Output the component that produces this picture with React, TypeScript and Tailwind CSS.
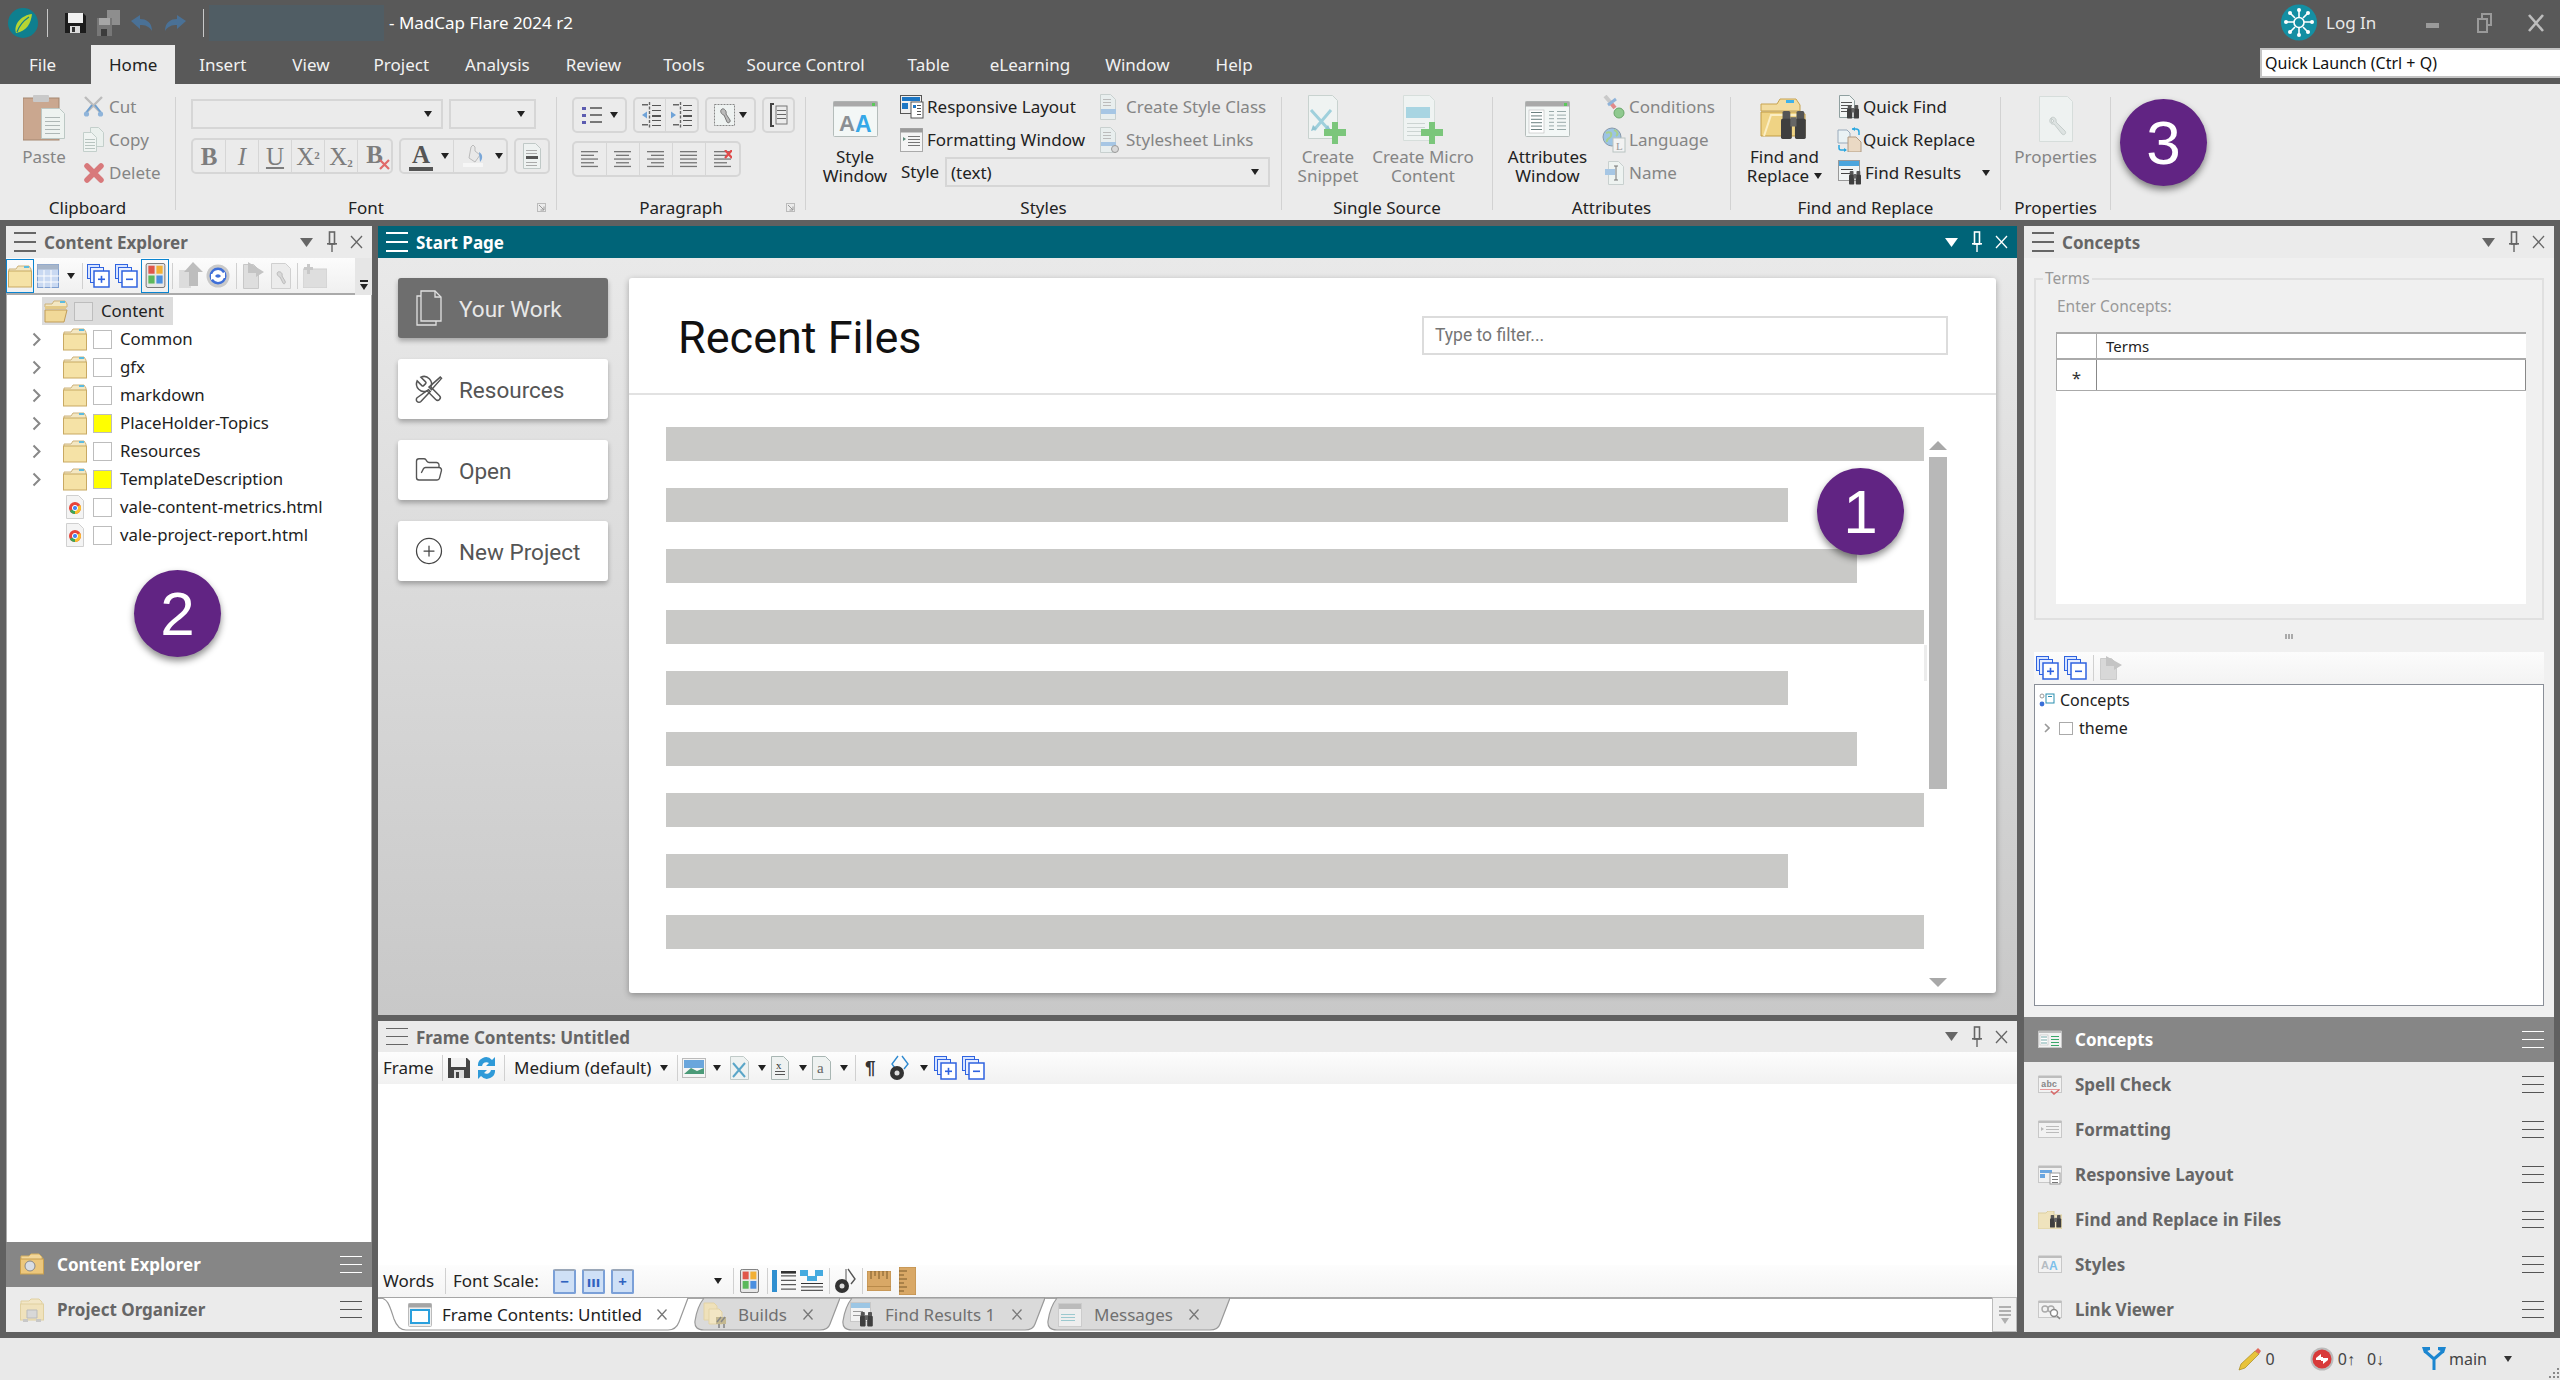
import { ReactNode } from "react";
import { CirclePlus, FolderOpen } from "lucide-react";
import clsx from "clsx";

/* ---------- small drawing helpers ---------- */

function Ico({ w, h, vb, children, className }: { w: number; h: number; vb?: string; children: ReactNode; className?: string }) {
  return (
    <svg width={w} height={h} viewBox={vb ?? `0 0 ${w} ${h}`} className={clsx("shrink-0", className)}>
      {children}
    </svg>
  );
}

function Caret({ color = "#222", className }: { color?: string; className?: string }) {
  return (
    <Ico w={8} h={6} className={className}>
      <path d="M0 0h8L4 6z" fill={color} />
    </Ico>
  );
}

function Bino({ x = 0, y = 0, s = 1 }: { x?: number; y?: number; s?: number }) {
  return (
    <g transform={`translate(${x} ${y}) scale(${s})`}>
      <rect x="1" y="0" width="5" height="6" rx="1" fill="#555" />
      <rect x="10" y="0" width="5" height="6" rx="1" fill="#555" />
      <rect x="0" y="5" width="7" height="13" rx="1" fill="#3f3f3f" />
      <rect x="9" y="5" width="7" height="13" rx="1" fill="#3f3f3f" />
      <rect x="6" y="4" width="4" height="6" fill="#666" />
    </g>
  );
}

function Sheet({ x, y, w, h, fill = "#f2f6f4", stroke = "#b8c6c2" }: { x: number; y: number; w: number; h: number; fill?: string; stroke?: string }) {
  return <path d={`M${x + 0.5} ${y + 0.5}h${w - 6}l5 5v${h - 6}h-${w - 1}z`} fill={fill} stroke={stroke} />;
}

function Lines({ x, y, w, n, step = 3, color = "#9aa" }: { x: number; y: number; w: number; n: number; step?: number; color?: string }) {
  return (
    <>
      {Array.from({ length: n }).map((_, i) => (
        <rect key={i} x={x} y={y + i * step} width={w} height={1} fill={color} />
      ))}
    </>
  );
}

function Hamburger({ color = "#666", thin }: { color?: string; thin?: boolean }) {
  return (
    <div className={clsx("flex flex-col shrink-0 w-[22px]", "gap-[7px]")}>
      <div className={thin ? "h-px" : "h-[2px]"} style={{ backgroundColor: color }} />
      <div className={thin ? "h-px" : "h-[2px]"} style={{ backgroundColor: color }} />
      <div className={thin ? "h-px" : "h-[2px]"} style={{ backgroundColor: color }} />
    </div>
  );
}

function Folder({ w = 24, h = 24, open }: { w?: number; h?: number; open?: boolean }) {
  return (
    <Ico w={w} h={h} vb="0 0 24 24">
      <path d="M1 5h7l2-3h11l2 3v3H1z" fill="#f3e7c2" stroke="#cdb27a" />
      <rect x="16" y="2" width="5" height="2" fill="#5bbbe0" />
      {open ? (
        <>
          <path d="M1 7h21v3H1z" fill="#e3c987" />
          <path d="M1 23V11h22l-3 12z" fill="#f1d998" stroke="#c19d58" />
        </>
      ) : (
        <rect x="0.5" y="7" width="23" height="16" fill="#f5e2a6" stroke="#c8a963" />
      )}
    </Ico>
  );
}

function ChromeDoc() {
  return (
    <Ico w={18} h={24}>
      <Sheet x={0} y={0} w={18} h={24} fill="#f4f4f4" stroke="#d0d0d0" />
      <circle cx="9" cy="13" r="6" fill="#e8443a" />
      <path d="M9 13L3.8 16a6 6 0 0 0 5.2 3z" fill="#3aa757" />
      <path d="M9 13v6a6 6 0 0 0 5.2-9z" fill="#fbc02d" />
      <circle cx="9" cy="13" r="2.6" fill="#4285f4" stroke="#fff" />
    </Ico>
  );
}

function Expand({ minus, w = 23, h = 24 }: { minus?: boolean; w?: number; h?: number }) {
  return (
    <Ico w={w} h={h} vb="0 0 23 24">
      <rect x="0.5" y="0.5" width="12" height="14" fill="#d7e4ff" stroke="#2f63e0" />
      <rect x="3.5" y="3.5" width="13" height="15" fill="#e8efff" stroke="#2f63e0" />
      <rect x="7" y="7" width="15" height="16" fill="#fff" stroke="#2f63e0" strokeWidth="1.5" />
      <rect x="11" y="14.5" width="7" height="1.6" fill="#2f63e0" />
      {!minus && <rect x="13.7" y="11.8" width="1.6" height="7" fill="#2f63e0" />}
    </Ico>
  );
}

function ColorSquares({ w = 22, h = 28 }: { w?: number; h?: number }) {
  return (
    <Ico w={w} h={h} vb="0 0 22 28">
      <rect x="0.5" y="0.5" width="21" height="27" rx="2" fill="#e7e7e7" stroke="#666" />
      <rect x="3" y="3" width="7" height="9" fill="#e0564a" />
      <rect x="12" y="3" width="7" height="9" fill="#f2b035" />
      <rect x="3" y="14" width="7" height="9" fill="#5cb85c" />
      <rect x="12" y="14" width="7" height="9" fill="#4a8fe0" />
    </Ico>
  );
}

function WinBox({ w = 45, h = 36, children }: { w?: number; h?: number; children?: ReactNode }) {
  return (
    <Ico w={w} h={h} vb="0 0 45 36">
      <rect x="0.5" y="0.5" width="44" height="35" rx="1" fill="#f3f7f6" stroke="#b5bdbb" />
      <rect x="0.5" y="0.5" width="44" height="5" fill="#a9a9a9" />
      <rect x="39" y="2" width="3" height="3" fill="#5ac85a" />
      {children}
    </Ico>
  );
}

function SmallPanelIcon({ kind }: { kind: "concepts" | "spell" | "format" | "layout" | "find" | "styles" | "link" }) {
  if (kind === "find") {
    return (
      <Ico w={24} h={18}>
        <path d="M0 2h8l2-2h6v4h8v14H0z" fill="#efe3bd" stroke="#dccf9f" />
        <Bino x={12} y={4} s={0.7} />
      </Ico>
    );
  }
  return (
    <Ico w={24} h={20}>
      <rect x="0.5" y="1.5" width="23" height="16" fill="#f2f2f2" stroke="#c8c8c8" />
      <rect x="0.5" y="0.5" width="23" height="2.5" fill="#bdbdbd" />
      {kind === "concepts" && (
        <>
          <rect x="2" y="5" width="8" height="10" fill="#fff" stroke="#bbb" strokeWidth=".6" />
          <Lines x={3} y={6.5} w={6} n={3} color="#7aa" />
          <Lines x={13} y={6} w={8} n={4} color="#3aa76a" />
        </>
      )}
      {kind === "spell" && (
        <>
          <text x="3" y="12" fontSize="9" fill="#888" fontFamily="'Liberation Mono',monospace">abc</text>
          <rect x="2" y="14" width="20" height="1" fill="#e89a9a" />
          <path d="M13 16l3 3 5-4" fill="none" stroke="#d96a6a" strokeWidth="1.6" />
        </>
      )}
      {kind === "format" && (
        <>
          <path d="M3 7l3 2-3 2z" fill="#bbb" />
          <Lines x={8} y={6} w={13} n={3} step={3} color="#bbb" />
        </>
      )}
      {kind === "layout" && (
        <>
          <rect x="2" y="5" width="12" height="3" fill="#6ba6e0" />
          <rect x="2" y="9" width="5" height="4" fill="#6ba6e0" />
          <rect x="12" y="8" width="10" height="11" fill="#fff" stroke="#999" />
          <Lines x={14} y={11} w={6} n={3} color="#777" />
        </>
      )}
      {kind === "styles" && (
        <>
          <text x="3" y="14" fontSize="11" fill="#b5bcc2" fontWeight="700" fontFamily="'Liberation Sans',sans-serif">A</text>
          <text x="11" y="15" fontSize="12" fill="#7cc0ea" fontWeight="700" fontFamily="'Liberation Sans',sans-serif">A</text>
        </>
      )}
      {kind === "link" && (
        <>
          <circle cx="7" cy="9" r="3" fill="none" stroke="#aaa" strokeWidth="1.4" />
          <circle cx="13" cy="9" r="3" fill="none" stroke="#aaa" strokeWidth="1.4" />
          <circle cx="16" cy="13" r="3.5" fill="#fff" stroke="#888" strokeWidth="1.4" />
          <path d="M19 16l3 3" stroke="#888" strokeWidth="1.6" />
        </>
      )}
    </Ico>
  );
}

/* ---------- ribbon parts ---------- */

function Sep() {
  return <div className="w-px h-[113px] mt-[13px] bg-[#d2d2d2] shrink-0" />;
}

function Group({ label, className, launcher, children }: { label: string; className: string; launcher?: boolean; children: ReactNode }) {
  return (
    <div className={clsx("flex flex-col h-[136px] shrink-0", className)}>
      <div className="h-[112px] flex">{children}</div>
      <div className="relative h-[24px] leading-[24px] text-center text-[#222]">
        {label}
        {launcher && (
          <Ico w={9} h={9} className="absolute right-[10px] top-[7px]">
            <rect x="0.5" y="0.5" width="8" height="8" fill="none" stroke="#bbb" />
            <path d="M2 2l5 5M7 3.5V7H3.5" fill="none" stroke="#999" />
          </Ico>
        )}
      </div>
    </div>
  );
}

function SmallBtn({ icon, label, off, gap = "ml-[4px]", slot = "w-[23px]", className }: { icon: ReactNode; label: string; off?: boolean; gap?: string; slot?: string; className?: string }) {
  return (
    <div className={clsx("flex items-center h-[33px] whitespace-nowrap", className)}>
      <div className={clsx("flex justify-center items-center shrink-0", slot)}>{icon}</div>
      <span className={clsx(gap, off ? "text-[#858585]" : "text-[#222]")}>{label}</span>
    </div>
  );
}

function BigBtn({ icon, lines, off, className, caret }: { icon: ReactNode; lines: string[]; off?: boolean; className: string; caret?: boolean }) {
  return (
    <div className={clsx("flex flex-col items-center pt-[9px] shrink-0", className)}>
      <div className="h-[52px] flex items-center justify-center">{icon}</div>
      <div className={clsx("mt-[2px] text-center leading-[19px]", off ? "text-[#858585]" : "text-[#222]")}>
        {lines.map((l, i) => (
          <div key={l} className="whitespace-nowrap">
            {l}
            {caret && i === lines.length - 1 && <Caret className="inline-block ml-[5px] mb-[2px]" />}
          </div>
        ))}
      </div>
    </div>
  );
}

function Select({ className, value }: { className: string; value?: string }) {
  return (
    <div className={clsx("h-[30px] border-2 border-[#d6d6d6] flex items-center px-[4px] text-[#222] shrink-0", className)}>
      <span className="pt-[2px]">{value}</span>
      <Caret className="ml-auto mr-[5px]" />
    </div>
  );
}

function BtnGroup({ children, className }: { children: ReactNode; className?: string }) {
  return <div className={clsx("flex h-[36px] border-2 border-[#d6d6d6] rounded-[5px] divide-x divide-[#d6d6d6] shrink-0", className)}>{children}</div>;
}

function Cell({ children, className = "w-[33px]" }: { children: ReactNode; className?: string }) {
  return <div className={clsx("h-full flex items-center justify-center", className)}>{children}</div>;
}

function SerifGlyph({ children, className }: { children: ReactNode; className?: string }) {
  return <span className={clsx("[font-family:'Liberation_Serif',serif] text-[25px] leading-none text-[#7d7d7d]", className)}>{children}</span>;
}

function AlignIcon({ kind }: { kind: "left" | "center" | "right" | "just" | "clear" }) {
  const rows = [
    [0, 17],
    kind === "left" || kind === "clear" ? [0, 13] : kind === "center" ? [2, 13] : kind === "right" ? [4, 13] : [0, 17],
    [0, 17],
    kind === "left" || kind === "clear" ? [0, 13] : kind === "center" ? [2, 13] : kind === "right" ? [4, 13] : [0, 17],
    [0, 17],
  ];
  return (
    <Ico w={18} h={18}>
      {rows.map(([x, w], i) => (
        <rect key={i} x={x} y={1 + i * 3.7} width={w} height={1.3} fill="#777" />
      ))}
      {kind === "clear" && <path d="M11 0l7 8M18 0l-7 8" stroke="#e04a4a" strokeWidth="2.2" />}
    </Ico>
  );
}

function IndentIcon({ right }: { right?: boolean }) {
  return (
    <Ico w={23} h={26}>
      <path d="M10.5 0v26" stroke="#666" strokeWidth="1.4" strokeDasharray="3 1.5" />
      <rect x="3" y="2" width="6" height="1.5" fill="#666" />
      <rect x="3" y="22" width="6" height="1.5" fill="#666" />
      <Lines x={13} y={3} w={9} n={5} step={5} color="#555" />
      <rect x="13" y="13" width="9" height="2" fill="#555" />
      <path d={right ? "M1 9.5l5 3.5-5 3.5z" : "M8 9.5L3 13l5 3.5z"} fill="#6fa3d8" />
    </Ico>
  );
}

/* ---------- ribbon icons ---------- */

const PasteIcon = (
  <Ico w={42} h={47}>
    <rect x="0" y="3" width="36" height="42" fill="#caa78f" stroke="#a58770" />
    <rect x="10" y="0" width="16" height="7" rx="1" fill="#c9c9c9" />
    <path d="M18.5 13.5h18l5 5v25h-23z" fill="#eef3f0" stroke="#bcc8c4" />
    <Lines x={22} y={22} w={15} n={5} step={4} color="#aeb7b5" />
  </Ico>
);

const CutIcon = (
  <Ico w={21} h={22}>
    <path d="M2 1l15 15M19 1L4 16" stroke="#bcbcbc" strokeWidth="2.4" />
    <path d="M9 9L2 18M12 9l7 9" stroke="#6f9fcf" strokeWidth="2" />
    <circle cx="3.5" cy="18" r="2.6" fill="#8fb4da" />
    <circle cx="17.5" cy="18" r="2.6" fill="#8fb4da" />
  </Ico>
);

const CopyIcon = (
  <Ico w={21} h={25}>
    <Sheet x={7} y={0} w={14} h={20} fill="#eaf0ed" stroke="#c3cfcb" />
    <Sheet x={0} y={5} w={14} h={20} fill="#f0f4f2" stroke="#c3cfcb" />
    <Lines x={2} y={12} w={10} n={4} color="#b8c4c0" />
  </Ico>
);

const DeleteIcon = (
  <Ico w={20} h={22}>
    <path d="M3 4l14 14M17 4L3 18" stroke="#d8797b" strokeWidth="5.5" strokeLinecap="round" />
  </Ico>
);

const SnippetIcon = (
  <Ico w={41} h={49}>
    <Sheet x={0} y={0} w={30} h={44} fill="#eff3f2" stroke="#c8d2cf" />
    <path d="M3 15l18 20M23 15L6 35" stroke="#9fd0dc" strokeWidth="3" />
    <path d="M5 30l-2 6 6-2zM20 30l3 6-6-2z" fill="#8fc4d2" />
    <path d="M24 27h6v7h8v7h-8v8h-6v-8h-8v-7h8z" fill="#7bc67b" />
  </Ico>
);

const MicroIcon = (
  <Ico w={41} h={49}>
    <Sheet x={0} y={0} w={32} h={46} fill="#eff3f2" stroke="#d6dedb" />
    <rect x="3" y="12" width="24" height="11" fill="#a8d5e2" />
    <Lines x={4} y={28} w={18} n={4} step={4} color="#ccd4d2" />
    <path d="M26 27h6v7h8v7h-8v8h-6v-8h-8v-7h8z" fill="#7bc67b" />
  </Ico>
);

const FindReplaceIcon = (
  <Ico w={50} h={42}>
    <path d="M1 6h16l3-5h16l4 6v6H1z" fill="#f2dca0" stroke="#c7a350" />
    <rect x="26" y="2" width="8" height="3" fill="#3eb2ea" />
    <path d="M1 38V14h36l8 2v22z" fill="#efd384" stroke="#c19c45" />
    <path d="M4 38l7-21h30" fill="none" stroke="#fbeec4" strokeWidth="2" />
    <Bino x={21} y={13} s={1.55} />
  </Ico>
);

const QuickFindIcon = (
  <Ico w={22} h={24}>
    <Sheet x={0} y={0} w={16} h={23} fill="#f2f5f4" stroke="#8fa0a0" />
    <Lines x={2} y={7} w={11} n={4} color="#555" />
    <Bino x={8} y={10} s={0.75} />
  </Ico>
);

const QuickReplaceIcon = (
  <Ico w={25} h={25}>
    <path d="M1 3h9l3 3v10H1z" fill="#eaf2f4" stroke="#9ab" />
    <path d="M11 10h8l5 5v10H11z" fill="#ead9c4" stroke="#b09a82" />
    <path d="M15 2h4a3 3 0 0 1 3 3v3" fill="none" stroke="#2aa7e0" strokeWidth="1.5" />
    <path d="M15 2l3-2v4z" fill="#2aa7e0" />
    <path d="M2 18v3a2 2 0 0 0 2 2h5" fill="none" stroke="#2aa7e0" strokeWidth="1.5" />
    <path d="M10 23l-3-2v4z" fill="#2aa7e0" />
  </Ico>
);

const FindResultsIcon = (
  <Ico w={24} h={25}>
    <rect x="0.5" y="0.5" width="21" height="20" fill="#f0f4f4" stroke="#999" />
    <rect x="1" y="1" width="20" height="5" fill="#4aa5dd" />
    <Lines x={3} y={9} w={12} n={2} step={4} color="#444" />
    <Bino x={11} y={11} s={0.75} />
  </Ico>
);

const SwatchDoc = ({ tint }: { tint: "blue" | "link" }) => (
  <Ico w={20} h={26}>
    <Sheet x={0} y={0} w={16} h={26} fill="#e8eeee" stroke="#c8d0cf" />
    <Lines x={3} y={5} w={8} n={3} color="#bbb" />
    <rect x="1" y="15" width="15" height={tint === "blue" ? 5 : 4} fill="#a6c6e4" />
    {tint === "link" && <circle cx="15" cy="22" r="3.5" fill="#d8d8d8" stroke="#999" />}
  </Ico>
);

const ResponsiveIcon = (
  <Ico w={24} h={24}>
    <rect x="0.5" y="0.5" width="21" height="18" fill="#eee" stroke="#555" />
    <rect x="2" y="2" width="18" height="4" fill="#1c76c4" />
    <rect x="2" y="8" width="6" height="6" fill="#1c76c4" />
    <rect x="11" y="7" width="12" height="16" fill="#fff" stroke="#555" />
    <rect x="13" y="10" width="3" height="3" fill="#1c76c4" />
    <Lines x={17} y={10} w={4} n={4} color="#555" />
  </Ico>
);

const FormatWinIcon = (
  <Ico w={23} h={24}>
    <rect x="0.5" y="0.5" width="22" height="23" fill="#f4f4f4" stroke="#aaa" />
    <rect x="0.5" y="0.5" width="22" height="4" fill="#9a9a9a" />
    <path d="M3 9l3 2-3 2z" fill="#5b8a7a" />
    <Lines x={8} y={8} w={12} n={4} color="#777" />
  </Ico>
);

const ConditionsIcon = (
  <Ico w={23} h={24}>
    <path d="M3 1l6 7" stroke="#c9c9c9" strokeWidth="4" />
    <path d="M8 7l5 6" stroke="#e18a8a" strokeWidth="4" />
    <path d="M6 10l8-6" stroke="#8fb4da" strokeWidth="3" />
    <circle cx="17" cy="18" r="5" fill="#8fc98f" stroke="#6aa86a" />
  </Ico>
);

const LanguageIcon = (
  <Ico w={24} h={26}>
    <circle cx="10" cy="10" r="9" fill="#9cc4e4" stroke="#89a" />
    <path d="M4 6c4-2 6 0 5 3s-5 2-4 6M12 3c3 1 5 4 2 6" stroke="#a7cf8f" strokeWidth="2" fill="none" />
    <rect x="11" y="11" width="12" height="14" fill="#f2f2f2" stroke="#b9c4c2" />
    <text x="14" y="23" fontSize="11" fill="#999" fontFamily="'Liberation Serif',serif">L</text>
  </Ico>
);

const NameIcon = (
  <Ico w={20} h={24}>
    <Sheet x={4} y={0} w={16} h={24} fill="#eef3f1" stroke="#c8d0cf" />
    <rect x="1" y="8" width="10" height="6" fill="#a6c6e4" />
    <path d="M12 5v14M10 5h4M10 19h4" stroke="#777" fill="none" />
  </Ico>
);

const PropertiesIcon = (
  <Ico w={34} h={46}>
    <Sheet x={0} y={0} w={34} h={46} fill="#eef2f1" stroke="#d6dddb" />
    <path d="M12 22c-3 3 0 7 3 6l8 10c2 2 5-1 3-3L17 26c1-4-3-6-5-4l3 3-2 2z" fill="#dde3e2" stroke="#c6cecc" />
  </Ico>
);

const AttributesIcon = (
  <WinBox w={45} h={36}>
    <rect x="4" y="9" width="15" height="23" fill="#fff" stroke="#bbb" strokeWidth=".6" />
    <Lines x={6} y={11} w={11} n={6} step={3.4} color="#6c8080" />
    <Lines x={24} y={10} w={5} n={6} step={3.6} color="#9aa" />
    <Lines x={32} y={10} w={9} n={6} step={3.6} color="#9aa" />
  </WinBox>
);

const StyleWindowIcon = (
  <WinBox>
    <text x="6" y="30" fontSize="22" fill="#8a8f93" fontWeight="700" fontFamily="'Liberation Sans',sans-serif">A</text>
    <text x="22" y="31" fontSize="23" fill="#35a8e8" fontWeight="700" fontFamily="'Liberation Sans',sans-serif">A</text>
  </WinBox>
);

function Ribbon() {
  return (
    <div className="relative h-[136px] bg-[#ebebeb] flex text-[17px] shrink-0">
      <Group label="Clipboard" className="w-[175px]">
        <div className="flex pl-[22px] pt-[6px]">
          <div className="w-[44px] flex flex-col items-center pt-[5px] text-[#858585]">
            {PasteIcon}
            <span className="mt-[3px] leading-[24px]">Paste</span>
          </div>
          <div className="ml-[16px] flex flex-col">
            <SmallBtn icon={CutIcon} label="Cut" off />
            <SmallBtn icon={CopyIcon} label="Copy" off />
            <SmallBtn icon={DeleteIcon} label="Delete" off />
          </div>
        </div>
      </Group>
      <Sep />
      <Group label="Font" className="w-[380px]" launcher>
        <div className="pl-[15px] pt-[15px]">
          <div className="flex gap-[6px]">
            <Select className="w-[252px]" />
            <Select className="w-[87px]" />
          </div>
          <div className="flex gap-[6px] mt-[9px]">
            <BtnGroup>
              <Cell><SerifGlyph className="font-bold">B</SerifGlyph></Cell>
              <Cell><SerifGlyph className="italic">I</SerifGlyph></Cell>
              <Cell><SerifGlyph className="underline">U</SerifGlyph></Cell>
              <Cell><SerifGlyph>X<sup className="text-[11px] font-bold">2</sup></SerifGlyph></Cell>
              <Cell><SerifGlyph>X<sub className="text-[11px] font-bold">2</sub></SerifGlyph></Cell>
              <Cell>
                <span className="relative">
                  <SerifGlyph className="font-bold">B</SerifGlyph>
                  <Ico w={11} h={11} className="absolute -right-[7px] bottom-0">
                    <path d="M1 1l9 9M10 1l-9 9" stroke="#e06a6a" strokeWidth="2.2" />
                  </Ico>
                </span>
              </Cell>
            </BtnGroup>
            <BtnGroup>
              <Cell className="w-[53px] gap-[8px] pl-[4px]">
                <span className="flex flex-col items-center">
                  <SerifGlyph className="font-bold text-[#555]">A</SerifGlyph>
                  <span className="w-[24px] h-[4px] bg-[#555]" />
                </span>
                <Caret />
              </Cell>
              <Cell className="w-[52px] gap-[9px] pl-[4px]">
                <Ico w={24} h={24}>
                  <path d="M9 3l2-2 2 2v4l5 4-5 7-6-4z" fill="#e8e8e8" stroke="#bbb" />
                  <path d="M17 8c4 2 4 7 1 10z" fill="#7aa7d8" />
                  <rect x="1" y="19" width="20" height="4" fill="#f6f6f6" />
                </Ico>
                <Caret />
              </Cell>
            </BtnGroup>
            <BtnGroup>
              <Cell className="w-[32px]">
                <Ico w={18} h={26}>
                  <Sheet x={0} y={0} w={18} h={26} fill="#eef2f1" stroke="#c0c9c7" />
                  <Lines x={3} y={7} w={11} n={2} step={3} color="#aaa" />
                  <rect x="3" y="13" width="12" height="3" fill="#555" />
                  <Lines x={3} y={19} w={11} n={2} step={3} color="#aaa" />
                </Ico>
              </Cell>
            </BtnGroup>
          </div>
        </div>
      </Group>
      <Sep />
      <Group label="Paragraph" className="w-[248px]" launcher>
        <div className="pl-[15px] pt-[13px]">
          <div className="flex gap-[6px]">
            <BtnGroup>
              <Cell className="w-[51px] gap-[8px]">
                <Ico w={20} h={20}>
                  {[2, 9, 16].map((y) => (
                    <g key={y}>
                      <rect x="0" y={y} width="4" height="3" fill="#5b5bb0" />
                      <rect x="8" y={y} width="12" height="2" fill="#777" />
                    </g>
                  ))}
                </Ico>
                <Caret />
              </Cell>
            </BtnGroup>
            <BtnGroup>
              <Cell className="w-[31px]"><IndentIcon /></Cell>
              <Cell className="w-[31px]"><IndentIcon right /></Cell>
            </BtnGroup>
            <BtnGroup>
              <Cell className="w-[47px] gap-[3px]">
                <Ico w={22} h={22}>
                  <rect x="0.5" y="0.5" width="20" height="21" fill="#eef2f1" stroke="#888" strokeDasharray="2 1" />
                  <path d="M8 5c-3 2 0 6 2 6l3 7c1 2 4 0 3-2l-4-6c1-3-2-6-4-5z" fill="#bbb" stroke="#777" />
                </Ico>
                <Caret />
              </Cell>
            </BtnGroup>
            <BtnGroup>
              <Cell className="w-[29px]">
                <Ico w={18} h={24}>
                  <path d="M4 1H1v22h3" fill="none" stroke="#444" strokeWidth="2" />
                  <rect x="6" y="3" width="11" height="18" fill="none" stroke="#777" />
                  <Lines x={7} y={7} w={9} n={3} step={4} color="#666" />
                </Ico>
              </Cell>
            </BtnGroup>
          </div>
          <div className="mt-[8px] flex">
            <BtnGroup>
              <Cell><AlignIcon kind="left" /></Cell>
              <Cell><AlignIcon kind="center" /></Cell>
              <Cell><AlignIcon kind="right" /></Cell>
              <Cell><AlignIcon kind="just" /></Cell>
              <Cell><AlignIcon kind="clear" /></Cell>
            </BtnGroup>
          </div>
        </div>
      </Group>
      <Sep />
      <Group label="Styles" className="w-[475px]">
        <BigBtn icon={StyleWindowIcon} lines={["Style", "Window"]} className="w-[94px] pl-[4px]" />
        <div className="pt-[6px] flex flex-col">
          <div className="flex">
            <SmallBtn icon={ResponsiveIcon} label="Responsive Layout" className="w-[198px]" />
            <SmallBtn icon={<SwatchDoc tint="blue" />} label="Create Style Class" off slot="w-[24px]" />
          </div>
          <div className="flex">
            <SmallBtn icon={FormatWinIcon} label="Formatting Window" className="w-[198px]" />
            <SmallBtn icon={<SwatchDoc tint="link" />} label="Stylesheet Links" off slot="w-[24px]" />
          </div>
          <div className="flex items-center h-[30px] mt-px">
            <span className="w-[45px] pl-[1px] text-[#222]">Style</span>
            <Select className="w-[325px]" value="(text)" />
          </div>
        </div>
      </Group>
      <Sep />
      <Group label="Single Source" className="w-[210px]">
        <BigBtn icon={SnippetIcon} lines={["Create", "Snippet"]} off className="w-[92px]" />
        <BigBtn icon={MicroIcon} lines={["Create Micro", "Content"]} off className="w-[118px] pr-[20px]" />
      </Group>
      <Sep />
      <Group label="Attributes" className="w-[237px]">
        <BigBtn icon={AttributesIcon} lines={["Attributes", "Window"]} className="w-[109px]" />
        <div className="pt-[6px] flex flex-col">
          <SmallBtn icon={ConditionsIcon} label="Conditions" off slot="w-[23px]" />
          <SmallBtn icon={LanguageIcon} label="Language" off slot="w-[23px]" />
          <SmallBtn icon={NameIcon} label="Name" off slot="w-[23px]" />
        </div>
      </Group>
      <Sep />
      <Group label="Find and Replace" className="w-[269px]">
        <BigBtn icon={FindReplaceIcon} lines={["Find and", "Replace"]} className="w-[107px]" caret />
        <div className="pt-[6px] flex flex-col">
          <SmallBtn icon={QuickFindIcon} label="Quick Find" gap="ml-[2px]" />
          <SmallBtn icon={QuickReplaceIcon} label="Quick Replace" gap="ml-[2px]" />
          <div className="flex items-center">
            <SmallBtn icon={FindResultsIcon} label="Find Results" gap="ml-[4px]" />
            <Caret className="ml-[21px]" />
          </div>
        </div>
      </Group>
      <Sep />
      <Group label="Properties" className="w-[109px]">
        <BigBtn icon={PropertiesIcon} lines={["Properties"]} off className="w-full" />
      </Group>
      <Sep />
    </div>
  );
}

/* ---------- title bar ---------- */

function TitleBar() {
  const menu: [string, string][] = [
    ["Insert", "ml-[24px]"],
    ["View", "ml-[46px]"],
    ["Project", "ml-[44px]"],
    ["Analysis", "ml-[36px]"],
    ["Review", "ml-[36px]"],
    ["Tools", "ml-[42px]"],
    ["Source Control", "ml-[42px]"],
    ["Table", "ml-[43px]"],
    ["eLearning", "ml-[40px]"],
    ["Window", "ml-[35px]"],
    ["Help", "ml-[46px]"],
  ];
  return (
    <div className="h-[84px] bg-[#595959] text-[17px] shrink-0">
      <div className="h-[45px] flex items-center">
        <Ico w={30} h={30} className="ml-[8px]">
          <circle cx="15" cy="15" r="15" fill="#0f7f8f" />
          <path d="M8 25c-3-9 6-18 16-19-1 9-5 17-16 19z" fill="#b5d433" />
          <path d="M9 24c2-6 6-11 12-15" stroke="#0f7f8f" strokeWidth="1.2" fill="none" />
        </Ico>
        <div className="ml-[9px] w-px h-[28px] bg-[#c8c8c8]" />
        <Ico w={21} h={21} className="ml-[17px]">
          <path d="M0 1h18l3 3v17H0z" fill="#1c1c1c" />
          <rect x="3" y="1" width="15" height="10" fill="#f1f1f1" />
          <rect x="5" y="14" width="10" height="7" fill="#dcdcdc" />
          <rect x="7" y="15" width="3" height="5" fill="#333" />
        </Ico>
        <Ico w={23} h={26} className="ml-[11px]">
          <rect x="10" y="0" width="13" height="15" fill="#8e8e8e" />
          <rect x="0" y="8" width="15" height="18" fill="#777" />
          <rect x="2" y="8" width="11" height="7" fill="#a6a6a6" />
          <rect x="4" y="19" width="6" height="7" fill="#3c3c3c" />
        </Ico>
        <Ico w={21} h={16} className="ml-[11px]">
          <path d="M0 6l9-6v4c6 0 12 3 12 12-3-5-7-6-12-6v4z" fill="#4a7196" />
        </Ico>
        <Ico w={23} h={16} className="ml-[11px]">
          <path d="M23 6l-9-6v4C8 4 2 7 2 16c3-5 7-6 12-6v4z" fill="#4a7196" />
        </Ico>
        <div className="ml-[17px] w-px h-[28px] bg-[#c8c8c8]" />
        <div className="ml-[5px] w-[175px] h-[36px] bg-[#505d64]" />
        <span className="ml-[5px] text-white">- MadCap Flare 2024 r2</span>
        <Ico w={36} h={37} className="ml-auto">
          <circle cx="18" cy="18.5" r="18" fill="#148fa3" />
          <g stroke="#fff" strokeWidth="1.6" fill="none">
            <circle cx="18" cy="18.5" r="5" />
            <path d="M18 13V6M23 18h8M18 24v7M13 18H5M22 14l5-5M22 23l5 5M14 23l-5 5M14 14L9 9" />
          </g>
          {[[18, 6], [31, 18], [18, 31], [5, 18], [27, 9], [27, 28], [9, 28], [9, 9]].map(([x, y]) => (
            <circle key={`${x}-${y}`} cx={x} cy={y} r="2" fill="#fff" />
          ))}
        </Ico>
        <span className="ml-[9px] w-[50px] whitespace-nowrap text-[#e8e8e8]">Log In</span>
        <div className="ml-[50px] w-[13px] h-[5px] mt-[6px] bg-[#9a9a9a]" />
        <Ico w={15} h={20} className="ml-[38px]">
          <rect x="5" y="1" width="9" height="11" fill="none" stroke="#9a9a9a" strokeWidth="2" />
          <rect x="1" y="6" width="9" height="13" fill="#595959" stroke="#9a9a9a" strokeWidth="2" />
        </Ico>
        <Ico w={16} h={18} className="ml-[36px] mr-[16px]">
          <path d="M1 1l14 16M15 1L1 17" stroke="#bdbdbd" strokeWidth="2.6" />
        </Ico>
      </div>
      <div className="h-[39px] flex text-[#f2f2f2]">
        <span className="ml-[29px] self-center">File</span>
        <div className="ml-[35px] w-[84px] h-full bg-[#ebebeb] text-[#222] flex items-center justify-center">Home</div>
        {menu.map(([m, c]) => (
          <span key={m} className={clsx("self-center whitespace-nowrap", c)}>{m}</span>
        ))}
        <div className="ml-auto mt-[3px] w-[300px] h-[30px] bg-white border-2 border-[#c4c4c4] border-r-0 text-[16px] text-[#111] flex items-center pl-[3px]">
          Quick Launch (Ctrl + Q)
        </div>
      </div>
    </div>
  );
}

/* ---------- dock panels ---------- */

function PanelControls({ color = "#666" }: { color?: string }) {
  return (
    <div className="ml-auto flex items-center pr-[9px] shrink-0">
      <Ico w={13} h={9}><path d="M0 0h13L6.5 9z" fill={color} /></Ico>
      <Ico w={10} h={22} className="ml-[14px]">
        <rect x="2.5" y="1" width="5" height="12" fill="none" stroke={color} strokeWidth="1.6" />
        <rect x="0" y="12" width="10" height="1.6" fill={color} />
        <rect x="4.3" y="13" width="1.4" height="8" fill={color} />
      </Ico>
      <Ico w={13} h={14} className="ml-[13px]">
        <path d="M1 1l11 12M12 1L1 13" stroke={color} strokeWidth="1.3" />
      </Ico>
    </div>
  );
}

function PanelHeader({ title, active, thin }: { title: string; active?: boolean; thin?: boolean }) {
  return (
    <div className={clsx("flex items-center shrink-0 pl-[8px]", thin ? "h-[31px]" : "h-[32px]", active ? "bg-[#006478] text-white" : "bg-[#ebebeb] text-[#666]")}>
      <Hamburger color={active ? "#fff" : "#666"} thin={thin} />
      <span className="ml-[8px] pt-[2px] font-bold text-[17px] whitespace-nowrap">{title}</span>
      <PanelControls color={active ? "#fff" : "#666"} />
    </div>
  );
}

function AccordionRow({ icon, label, active }: { icon: ReactNode; label: string; active?: boolean }) {
  return (
    <div className={clsx("flex items-center h-[45px] text-[17px] font-bold", active ? "bg-[#868686] text-white" : "bg-[#ebebeb] text-[#666]")}>
      <div className="w-[24px] ml-[14px] flex items-center justify-center shrink-0">{icon}</div>
      <span className="ml-[13px] whitespace-nowrap">{label}</span>
      <div className="ml-auto mr-[10px]">
        <Hamburger color={active ? "#fff" : "#555"} thin />
      </div>
    </div>
  );
}

function TreeRow({ label, yellow, doc, selected }: { label: string; yellow?: boolean; doc?: boolean; selected?: boolean }) {
  return (
    <div className="flex items-center h-[28px]">
      {selected ? (
        <div className="ml-[35px] w-[131px] h-[28px] bg-[#dcdcdc] flex items-center pl-[2px]">
          <Folder open />
          <div className="ml-[6px] w-[19px] h-[19px] border border-[#bdbdbd] bg-[#e4e4e4]" />
          <span className="ml-[8px]">{label}</span>
        </div>
      ) : (
        <>
          <div className="w-[56px] pl-[25px] shrink-0">
            {!doc && (
              <Ico w={9} h={15}>
                <path d="M1.5 1.5l6 6-6 6" fill="none" stroke="#888" strokeWidth="2" />
              </Ico>
            )}
          </div>
          {doc ? (
            <div className="w-[24px] flex justify-center"><ChromeDoc /></div>
          ) : (
            <Folder />
          )}
          <div className={clsx("ml-[6px] w-[19px] h-[19px] border border-[#bdbdbd] shrink-0", yellow ? "bg-[#ffff00]" : "bg-white")} />
          <span className="ml-[8px] whitespace-nowrap">{label}</span>
        </>
      )}
    </div>
  );
}

function ToolSep({ className }: { className?: string }) {
  return <div className={clsx("w-px h-[26px] bg-[#d0d0d0] shrink-0", className)} />;
}

function LeftPanel() {
  const items: { label: string; yellow?: boolean; doc?: boolean }[] = [
    { label: "Common" },
    { label: "gfx" },
    { label: "markdown" },
    { label: "PlaceHolder-Topics", yellow: true },
    { label: "Resources" },
    { label: "TemplateDescription", yellow: true },
    { label: "vale-content-metrics.html", doc: true },
    { label: "vale-project-report.html", doc: true },
  ];
  return (
    <div className="w-[366px] h-full flex flex-col shrink-0 bg-white">
      <PanelHeader title="Content Explorer" />
      <div className="h-[37px] flex items-center bg-linear-to-b from-[#fcfcfc] to-[#f0f0f0] border-b-2 border-[#aaa] shrink-0">
        <div className="w-[28px] h-[34px] border border-[#0a84d0] flex items-center justify-center shrink-0">
          <Folder />
        </div>
        <Ico w={22} h={24} className="ml-[3px]">
          <rect x="0.5" y="0.5" width="21" height="23" fill="#c9d9f2" stroke="#7f9fd0" />
          <rect x="0.5" y="0.5" width="21" height="5" fill="#a7b5c8" />
          <path d="M7 6v18M14 6v18M0 12h22M0 18h22" stroke="#fff" />
        </Ico>
        <Caret className="ml-[8px]" />
        <ToolSep className="ml-[7px]" />
        <div className="ml-[4px]"><Expand /></div>
        <div className="ml-[5px]"><Expand minus /></div>
        <div className="ml-[3px] w-[28px] h-[34px] border border-[#0a84d0] flex items-center justify-center shrink-0">
          <ColorSquares w={21} h={25} />
        </div>
        <ToolSep className="ml-[3px]" />
        <Ico w={26} h={28} className="ml-[4px]">
          <path d="M2 8h12v18H2z" fill="#dcdcdc" />
          <path d="M16 0l10 10h-5v14h-9V10H7z" fill="#bdbdbd" />
        </Ico>
        <Ico w={24} h={24} className="ml-[3px]">
          <circle cx="12" cy="12" r="11.5" fill="#c9c9c9" />
          <circle cx="12" cy="12" r="8.5" fill="#3f6fd8" />
          <path d="M6 11a6 6 0 0 1 11-2l2-1v6h-6l2-2a3.5 3.5 0 0 0-6 0zM18 13a6 6 0 0 1-11 2l-2 1v-6h6l-2 2a3.5 3.5 0 0 0 6 0z" fill="#fff" />
        </Ico>
        <ToolSep className="ml-[6px]" />
        <Ico w={21} h={28} className="ml-[6px]">
          <Sheet x={0} y={2} w={16} h={25} fill="#dedede" stroke="#c8c8c8" />
          <path d="M5 0l16 10-8 5v-4H5z" fill="#c4c4c4" />
        </Ico>
        <Ico w={20} h={28} className="ml-[7px]">
          <Sheet x={0} y={1} w={20} h={26} fill="#ececec" stroke="#d0d0d0" />
          <path d="M7 10c-2 1 0 5 2 5l3 6c1 2 3 0 2-2l-3-5c1-3-2-5-4-4z" fill="#d8d8d8" stroke="#bbb" />
        </Ico>
        <ToolSep className="ml-[6px]" />
        <Ico w={24} h={24} className="ml-[5px]">
          <rect x="0" y="5" width="24" height="19" fill="#dedede" stroke="#cfcfcf" />
          <rect x="4" y="0" width="3" height="10" fill="#c8c8c8" />
          <rect x="1" y="3" width="9" height="3" fill="#c8c8c8" />
        </Ico>
        <div className="ml-auto w-[17px] h-[37px] bg-[#e6e6e6] flex flex-col items-center justify-end pb-[5px] gap-[2px] mb-[-2px]">
          <div className="w-[8px] h-[2px] bg-[#222]" />
          <Caret />
        </div>
      </div>
      <div className="flex-1 pt-[2px] border-x border-[#aaa] text-[16.8px] text-[#222] min-h-0">
        <TreeRow label="Content" selected />
        {items.map((i) => (
          <TreeRow key={i.label} {...i} />
        ))}
      </div>
      <AccordionRow
        active
        label="Content Explorer"
        icon={
          <Ico w={24} h={24}>
            <path d="M1 3h8l2-2h8l3 3v4H1z" fill="#f2d79a" stroke="#d5b060" />
            <rect x="0.5" y="6" width="23" height="15" fill="#ecc77c" stroke="#c8a050" />
            <circle cx="10" cy="13" r="5" fill="#d8dde5" stroke="#888" />
          </Ico>
        }
      />
      <AccordionRow
        label="Project Organizer"
        icon={
          <Ico w={24} h={24}>
            <path d="M1 3h8l2-2h8l3 3v4H1z" fill="#f2e6c6" stroke="#e0d0a0" />
            <rect x="0.5" y="6" width="23" height="16" fill="#f0e2bc" stroke="#e0d0a0" />
            <path d="M7 12h10v8H7z" fill="#d8d8d8" stroke="#bbb" />
            <rect x="3" y="21" width="5" height="3" fill="#c8c8c8" />
            <rect x="16" y="21" width="5" height="3" fill="#c8c8c8" />
          </Ico>
        }
      />
    </div>
  );
}

function NavButton({ icon, label, active }: { icon: ReactNode; label: string; active?: boolean }) {
  return (
    <div className={clsx("h-[60px] rounded-[3px] shadow-[0_3px_5px_rgba(0,0,0,0.28)] flex items-center pl-[16px] [font-family:Roboto,sans-serif] text-[22.5px]", active ? "bg-[#6e6e6e] text-[#e8e8e8]" : "bg-white text-[#555]")}>
      <div className="w-[30px] flex justify-center shrink-0">{icon}</div>
      <span className="ml-[15px] pt-[3px] whitespace-nowrap">{label}</span>
    </div>
  );
}

function StartPage() {
  const bars = ["w-[1258px]", "w-[1122px]", "w-[1191px]", "w-[1258px]", "w-[1122px]", "w-[1191px]", "w-[1258px]", "w-[1122px]", "w-[1258px]"];
  return (
    <div className="h-[789px] flex flex-col shrink-0">
      <PanelHeader title="Start Page" active />
      <div className="flex-1 flex bg-linear-to-b from-[#e9e9e9] to-[#c8c8c8] pt-[20px]">
        <div className="w-[251px] pl-[20px] pr-[21px] flex flex-col gap-[21px] shrink-0">
          <NavButton
            active
            label="Your Work"
            icon={
              <svg width="26" height="36" viewBox="0 0 26 36" fill="none" stroke="#e0e0e0" strokeWidth="1.3">
                <path d="M5 1h14l6 6v24H5z" />
                <path d="M19 1v6h6" />
                <path d="M5 6H1v29h19v-4" />
              </svg>
            }
          />
          <NavButton
            label="Resources"
            icon={
              <svg width="30" height="30" viewBox="0 0 24 24" fill="none" stroke="#555" strokeWidth="1.2">
                <g transform="translate(24 0) scale(-1 1)">
                  <path d="M14.7 6.3a1 1 0 0 0 0 1.4l1.6 1.6a1 1 0 0 0 1.4 0l3.77-3.77a6 6 0 0 1-7.94 7.94l-6.91 6.91a2.12 2.12 0 0 1-3-3l6.91-6.91a6 6 0 0 1 7.94-7.94l-3.76 3.76z" />
                </g>
                <path d="M21 2.5l1 1-8 9-2-2zM11.5 12.5l1.5 1.5-7.5 8a1.5 1.5 0 0 1-3-3z" />
              </svg>
            }
          />
          <NavButton label="Open" icon={<FolderOpen size={32} strokeWidth={1.1} color="#555" />} />
          <NavButton label="New Project" icon={<CirclePlus size={30} strokeWidth={1} color="#444" />} />
        </div>
        <div className="relative w-[1367px] h-[715px] bg-white rounded-[3px] shadow-[0_2px_6px_rgba(0,0,0,0.3)] flex flex-col shrink-0">
          <div className="h-[117px] flex items-center justify-between pl-[49px] pr-[48px] border-b-2 border-[#e2e2e2] shrink-0">
            <h1 className="[font-family:Roboto,sans-serif] pt-[4px] text-[45px] text-[#111] font-normal">Recent Files</h1>
            <div className="w-[526px] h-[39px] border-2 border-[#dcdcdc] flex items-center pl-[11px] text-[17.5px] text-[#757575] [font-family:Roboto,sans-serif]">
              Type to filter...
            </div>
          </div>
          <div className="flex-1 flex pt-[32px] pl-[37px] min-h-0">
            <div className="relative w-[1258px] flex flex-col gap-[27px] shrink-0">
              {bars.map((b, i) => (
                <div key={i} className={clsx("h-[34px] bg-[#c9c9c7]", b)} />
              ))}
              <div className="absolute -right-[3px] top-[218px] w-[3px] h-[36px] bg-[#ececec]" />
            </div>
            <div className="ml-[5px] w-[18px] flex flex-col items-center mt-[14px]">
              <Ico w={18} h={9}><path d="M0 9L9 0l9 9z" fill="#a8a8a8" /></Ico>
              <div className="mt-[7px] w-[18px] h-[332px] bg-[#b8b8b8]" />
              <Ico w={18} h={9} className="mt-[189px]"><path d="M0 0h18L9 9z" fill="#a8a8a8" /></Ico>
            </div>
          </div>
        </div>
      </div>
    </div>
  );
}

function TabShape({ w, active }: { w: number; active?: boolean }) {
  const d = active
    ? `M0 1C8 1 10 10 14 22Q18 33 26 33L${w - 24} 33Q${w - 16} 33 ${w - 13} 25L${w - 4} 1`
    : `M12 1L${w} 1L${w - 10} 27Q${w - 12} 33 ${w - 20} 33L12 33Q2 33 3 24Q5 10 12 1Z`;
  return (
    <svg width={w} height={35} className="absolute left-0 top-0">
      <path d={d} fill={active ? "#fff" : "#dadada"} stroke="#999" strokeWidth="1.2" />
    </svg>
  );
}

function Tab({ w, pad, icon, label, labelCls, closeCls, active }: { w: number; pad: string; icon: ReactNode; label: string; labelCls: string; closeCls: string; active?: boolean }) {
  return (
    <div className={clsx("relative h-[35px] shrink-0 flex items-center text-[17px]", active ? "text-[#222]" : "text-[#707070]")} style={{ width: w }}>
      <TabShape w={w} active={active} />
      <div className={clsx("relative flex items-center", pad)}>
        <div className="w-[24px] flex justify-center">{icon}</div>
        <span className={clsx("whitespace-nowrap", labelCls)}>{label}</span>
        <Ico w={12} h={13} className={closeCls}>
          <path d="M1.5 1.5l9 10M10.5 1.5l-9 10" stroke="#777" strokeWidth="1.3" />
        </Ico>
      </div>
    </div>
  );
}

function FramePanel() {
  return (
    <div className="flex-1 flex flex-col min-h-0 bg-white">
      <PanelHeader title="Frame Contents: Untitled" thin />
      <div className="h-[32px] flex items-center bg-linear-to-b from-[#fdfdfd] to-[#f1f1f1] text-[17px] text-[#222] pl-[5px] shrink-0">
        <span className="w-[54px]">Frame</span>
        <ToolSep className="ml-[5px]" />
        <Ico w={22} h={22} className="ml-[5px]">
          <path d="M0 1h19l3 3v17H0z" fill="#444" />
          <rect x="3" y="1" width="15" height="9" fill="#f2f2f2" />
          <rect x="6" y="13" width="10" height="8" fill="#ddd" />
          <rect x="8" y="15" width="3" height="6" fill="#444" />
        </Ico>
        <Ico w={21} h={24} className="ml-[6px]">
          <path d="M2 10a8 8 0 0 1 14-6l3-3v9h-9l3-3a4.5 4.5 0 0 0-7 3z" fill="#2f9ad8" />
          <path d="M19 14a8 8 0 0 1-14 6l-3 3v-9h9l-3 3a4.5 4.5 0 0 0 7-3z" fill="#2f9ad8" />
        </Ico>
        <ToolSep className="ml-[7px]" />
        <span className="ml-[9px] w-[137px] whitespace-nowrap">Medium (default)</span>
        <Caret className="ml-[9px]" />
        <ToolSep className="ml-[9px]" />
        <Ico w={24} h={20} className="ml-[4px]">
          <rect x="0.5" y="0.5" width="23" height="19" fill="#f5f5f5" stroke="#bbb" />
          <rect x="2" y="2" width="20" height="8" fill="#6aa6dc" />
          <path d="M2 16l7-6 6 3 7-3v6z" fill="#4a9a78" />
        </Ico>
        <Caret className="ml-[7px]" />
        <Ico w={19} h={24} className="ml-[9px]">
          <Sheet x={0} y={0} w={19} h={24} fill="#eef2f1" stroke="#c0cac8" />
          <path d="M3 7l12 14M15 7L3 21" stroke="#5aa6c8" strokeWidth="2" />
        </Ico>
        <Caret className="ml-[9px]" />
        <Ico w={18} h={24} className="ml-[5px]">
          <Sheet x={0} y={0} w={18} h={24} fill="#eef2f1" stroke="#a8b6b3" />
          <text x="5" y="13" fontSize="11" fill="#333" fontFamily="'Liberation Serif',serif">x</text>
          <Lines x={4} y={15} w={10} n={2} color="#555" />
        </Ico>
        <Caret className="ml-[10px]" />
        <Ico w={19} h={24} className="ml-[5px]">
          <Sheet x={0} y={0} w={19} h={24} fill="#eef2f1" stroke="#a8b6b3" />
          <text x="5" y="17" fontSize="15" fill="#666" fontFamily="'Liberation Serif',serif">a</text>
        </Ico>
        <Caret className="ml-[9px]" />
        <ToolSep className="ml-[7px]" />
        <span className="ml-[9px] text-[19px] font-bold text-[#333] [font-family:'Liberation_Sans',sans-serif]">¶</span>
        <Ico w={24} h={26} className="ml-[12px]">
          <path d="M10 1L4 9 11 19M14 1l6 8-4 5" fill="none" stroke="#2f8ad0" strokeWidth="1.4" />
          <circle cx="9" cy="18" r="7" fill="#333" />
          <circle cx="9" cy="18" r="2.5" fill="#ddd" />
        </Ico>
        <Caret className="ml-[8px]" />
        <div className="ml-[6px]"><Expand /></div>
        <div className="ml-[5px]"><Expand minus /></div>
      </div>
      <div className="flex-1 min-h-0" />
      <div className="h-[32px] flex items-center bg-linear-to-b from-[#fdfdfd] to-[#f4f4f4] text-[17px] text-[#222] pl-[5px] shrink-0">
        <span className="w-[57px]">Words</span>
        <ToolSep className="ml-[5px]" />
        <span className="ml-[7px] w-[90px] whitespace-nowrap">Font Scale:</span>
        <div className="ml-[10px] flex gap-[6px]">
          {["−", "ııı", "+"].map((s) => (
            <div key={s} className="w-[23px] h-[25px] bg-[#cfe0f6] border-2 border-[#7ba0d8] border-t-[#9aa7b8] rounded-[2px] flex items-center justify-center text-[15px] leading-none text-[#2f63c0] font-bold">
              {s}
            </div>
          ))}
        </div>
        <Caret className="ml-[80px]" />
        <ToolSep className="ml-[11px]" />
        <div className="ml-[5px] flex"><ColorSquares w={21} h={24} /></div>
        <ToolSep className="ml-[7px]" />
        <Ico w={24} h={24} className="ml-[4px]">
          <rect x="0" y="1" width="5" height="22" fill="#2f8fd0" />
          <Lines x={9} y={2} w={15} n={5} step={4.4} color="#333" />
          <rect x="9" y="3" width="15" height="1.6" fill="#333" />
        </Ico>
        <Ico w={24} h={24} className="ml-[4px]">
          <rect x="0" y="1" width="8" height="6" fill="#45aadf" />
          <rect x="15" y="1" width="8" height="6" fill="#45aadf" />
          <rect x="7" y="7" width="10" height="5" fill="#45aadf" />
          <Lines x={1} y={14} w={22} n={3} step={3.4} color="#333" />
        </Ico>
        <ToolSep className="ml-[5px]" />
        <Ico w={24} h={26} className="ml-[4px]">
          <path d="M14 1l7 10-4 5" fill="none" stroke="#555" strokeWidth="1.4" />
          <path d="M12 1v14" stroke="#555" />
          <circle cx="8" cy="18" r="7" fill="#333" />
          <circle cx="8" cy="18" r="2.5" fill="#ddd" />
        </Ico>
        <ToolSep className="ml-[4px]" />
        <Ico w={24} h={20} className="ml-[4px]">
          <rect x="0" y="0" width="24" height="20" fill="#d9a866" stroke="#b98a4a" />
          <path d="M4 0v8M8 0v5M12 0v8M16 0v5M20 0v8" stroke="#7a5a2a" />
          <rect x="0" y="15" width="24" height="1" fill="#b98a4a" />
        </Ico>
        <Ico w={17} h={28} className="ml-[8px]">
          <rect x="0" y="0" width="17" height="28" fill="#d9a866" stroke="#b98a4a" />
          <path d="M0 4h8M0 8h5M0 12h8M0 16h5M0 20h8M0 24h5" stroke="#7a5a2a" />
        </Ico>
      </div>
      <div className="relative h-[35px] flex border-t-0 shrink-0 bg-white pl-[2px]">
        <div className="absolute left-0 right-[25px] top-0 h-[2px] bg-[#a6a6a6]" />
        <Tab
          active
          w={312}
          pad="pl-[28px]"
          label="Frame Contents: Untitled"
          labelCls="ml-[10px] w-[196px]"
          closeCls="ml-[18px]"
          icon={
            <Ico w={24} h={24}>
              <rect x="0.5" y="0.5" width="23" height="23" rx="1" fill="#eee" stroke="#bbb" />
              <rect x="0.5" y="0.5" width="23" height="4" fill="#a5a5a5" />
              <rect x="3" y="7" width="18" height="13" fill="#fff" stroke="#2aa0dd" strokeWidth="2" />
            </Ico>
          }
        />
        <Tab
          w={148}
          pad="pl-[11px]"
          label="Builds"
          labelCls="ml-[11px] w-[50px]"
          closeCls="ml-[14px]"
          icon={
            <Ico w={24} h={26}>
              <path d="M1 1h10l3 3v14H1z" fill="#efe1ba" stroke="#e3d3a6" />
              <path d="M6 7h10l3 3v12H6z" fill="#f2e6c4" stroke="#e3d3a6" />
              <path d="M13 15h10v7H13z" fill="#c4b890" />
              <path d="M14 20l4-5M18 20l4-5" stroke="#888" strokeWidth="1.5" />
              <rect x="15" y="22" width="2" height="4" fill="#999" />
              <rect x="20" y="22" width="2" height="4" fill="#999" />
            </Ico>
          }
        />
        <Tab
          w={205}
          pad="pl-[10px]"
          label="Find Results 1"
          labelCls="ml-[11px] w-[112px]"
          closeCls="ml-[14px]"
          icon={
            <Ico w={24} h={26}>
              <rect x="0.5" y="0.5" width="20" height="19" fill="#f2f2f2" stroke="#c8c8c8" />
              <rect x="1" y="1" width="19" height="5" fill="#9cc6e4" />
              <Lines x={3} y={9} w={10} n={2} step={4} color="#999" />
              <Bino x={10} y={10} s={0.8} />
            </Ico>
          }
        />
        <Tab
          w={185}
          pad="pl-[13px]"
          label="Messages"
          labelCls="ml-[12px] w-[80px]"
          closeCls="ml-[14px]"
          icon={
            <Ico w={24} h={24}>
              <rect x="0.5" y="0.5" width="23" height="23" fill="#eee" stroke="#ccc" />
              <rect x="1" y="1" width="22" height="5" fill="#bbb" />
              <Lines x={3} y={11} w={14} n={3} step={3} color="#9cc9cf" />
            </Ico>
          }
        />
        <div className="ml-auto w-[25px] h-[35px] bg-[#f0f0f0] border border-[#bbb] flex flex-col items-center justify-center gap-[2px] shrink-0">
          <div className="w-[12px] h-[2px] bg-[#b0b0b0]" />
          <div className="w-[12px] h-[2px] bg-[#b0b0b0]" />
          <div className="w-[12px] h-[2px] bg-[#b0b0b0]" />
          <Caret color="#b0b0b0" />
        </div>
      </div>
    </div>
  );
}

function RightPanel() {
  return (
    <div className="w-[530px] ml-px h-full flex flex-col shrink-0 bg-[#f0f0f0]">
      <PanelHeader title="Concepts" />
      <div className="flex-1 flex flex-col px-[10px] pt-[20px] min-h-0 text-[17px]">
        <div className="relative h-[342px] border-2 border-[#e0e0e0] shrink-0">
          <span className="absolute -top-[13px] left-[7px] px-[2px] bg-[#f0f0f0] text-[#999] text-[15.5px]">Terms</span>
          <div className="pt-[15px] pl-[21px] text-[#999] text-[15.5px]">Enter Concepts:</div>
          <div className="absolute left-[20px] top-[52px] w-[470px] h-[272px] bg-white">
            <div className="flex h-[28px] border-t-2 border-[#aaa] border-b-2">
              <div className="w-[40px] border-l border-[#aaa]" />
              <div className="flex-1 border-l border-[#aaa] pl-[9px] text-[15px] text-[#222] leading-[24px]">Terms</div>
            </div>
            <div className="flex h-[31px] border-b border-[#aaa]">
              <div className="w-[40px] border-l border-[#aaa] flex items-center justify-center text-[#333] pt-[5px]">*</div>
              <div className="flex-1 border-x border-[#888]" />
            </div>
          </div>
        </div>
        <div className="h-[32px] flex items-center justify-center gap-[1px] shrink-0">
          <div className="w-[2px] h-[5px] bg-[#aaa]" />
          <div className="w-[2px] h-[5px] bg-[#aaa]" />
          <div className="w-[2px] h-[5px] bg-[#aaa]" />
        </div>
        <div className="h-[32px] flex items-center pl-[2px] bg-linear-to-b from-[#fcfcfc] to-[#f3f3f3] shrink-0">
          <Expand />
          <div className="ml-[5px]"><Expand minus /></div>
          <ToolSep className="ml-[6px] h-[22px]" />
          <Ico w={22} h={24} className="ml-[6px]">
            <Sheet x={0} y={2} w={17} h={22} fill="#d8d8d8" stroke="#ccc" />
            <path d="M6 0l16 9-8 5v-4H6z" fill="#c4c4c4" />
          </Ico>
        </div>
        <div className="h-[322px] bg-white border border-[#8a8f98] pt-px text-[#222] shrink-0">
          <div className="h-[28px] flex items-center pl-[4px]">
            <Ico w={16} h={14}>
              <circle cx="3" cy="3" r="2" fill="none" stroke="#999" />
              <circle cx="3" cy="11" r="2.4" fill="#3a6fd8" />
              <rect x="7" y="1" width="8" height="9" fill="#fff" stroke="#2a8fb0" />
              <rect x="9" y="3" width="4" height="1" fill="#2a8fb0" />
            </Ico>
            <span className="ml-[5px] text-[16px]">Concepts</span>
          </div>
          <div className="h-[28px] flex items-center pl-[9px]">
            <Ico w={6} h={10}>
              <path d="M1 1l4 4-4 4" fill="none" stroke="#999" strokeWidth="1.6" />
            </Ico>
            <div className="ml-[9px] w-[14px] h-[13px] border border-[#aaa] bg-white" />
            <span className="ml-[6px] text-[16px]">theme</span>
          </div>
        </div>
        <div className="h-[11px] shrink-0" />
      </div>
      <AccordionRow active label="Concepts" icon={<SmallPanelIcon kind="concepts" />} />
      <AccordionRow label="Spell Check" icon={<SmallPanelIcon kind="spell" />} />
      <AccordionRow label="Formatting" icon={<SmallPanelIcon kind="format" />} />
      <AccordionRow label="Responsive Layout" icon={<SmallPanelIcon kind="layout" />} />
      <AccordionRow label="Find and Replace in Files" icon={<SmallPanelIcon kind="find" />} />
      <AccordionRow label="Styles" icon={<SmallPanelIcon kind="styles" />} />
      <AccordionRow label="Link Viewer" icon={<SmallPanelIcon kind="link" />} />
    </div>
  );
}

function StatusBar() {
  return (
    <div className="relative h-[42px] bg-[#e9e9e9] flex items-center justify-end pr-[48px] text-[16px] text-[#444] shrink-0">
      <Ico w={24} h={24}>
        <path d="M1 23l2-6L17 4l4 3L7 21z" fill="#e8c33a" stroke="#a88a20" strokeWidth=".7" />
        <path d="M17 4l3-3 3 3-2 3z" fill="#e26a5a" />
      </Ico>
      <span className="ml-[4px]">0</span>
      <Ico w={24} h={24} className="ml-[35px]">
        <circle cx="12" cy="12" r="11.5" fill="#bbb" />
        <circle cx="12" cy="12" r="9.5" fill="#d83a3a" />
        <path d="M6 11l5-4v3h2v3H6zM18 13l-5 4v-3h-2v-3h7z" fill="#fff" />
      </Ico>
      <span className="ml-[4px] whitespace-nowrap">0↑</span>
      <span className="ml-[12px] whitespace-nowrap">0↓</span>
      <Ico w={24} h={24} className="ml-[38px]">
        <path d="M12 23V12L4 5M12 12l8-7" fill="none" stroke="#1c86d0" strokeWidth="3" />
        <path d="M0 0h8v3l-3 1 2 3-5-1zM24 0h-8v3l3 1-2 3 5-1z" fill="#1c86d0" />
      </Ico>
      <span className="ml-[3px]">main</span>
      <Caret color="#333" className="ml-[17px]" />
      <Ico w={10} h={10} className="absolute right-[1px] bottom-[2px]">
        {[[8, 0], [8, 4], [8, 8], [4, 4], [4, 8], [0, 8]].map(([x, y]) => (
          <rect key={`${x}-${y}`} x={x} y={y} width="2" height="2" fill="#888" />
        ))}
      </Ico>
    </div>
  );
}

function Badge({ n, className }: { n: number; className: string }) {
  return (
    <div className={clsx("absolute w-[87px] h-[87px] rounded-full bg-[#612483] shadow-[0_4px_7px_rgba(0,0,0,0.45)] flex items-center justify-center text-white text-[62px] leading-none [font-family:'Liberation_Sans',sans-serif]", className)}>
      {n}
    </div>
  );
}

export default function App() {
  return (
    <div className="relative w-[2560px] h-[1380px] overflow-hidden flex flex-col [font-family:'Noto_Sans',sans-serif]">
      <TitleBar />
      <Ribbon />
      <div className="flex-1 min-h-0 bg-[#606060] flex gap-[6px] p-[6px]">
        <LeftPanel />
        <div className="w-[1639px] flex flex-col gap-[6px] shrink-0">
          <StartPage />
          <FramePanel />
        </div>
        <RightPanel />
      </div>
      <StatusBar />
      <Badge n={1} className="left-[1817px] top-[468px]" />
      <Badge n={2} className="left-[134px] top-[570px]" />
      <Badge n={3} className="left-[2120px] top-[99px]" />
    </div>
  );
}
